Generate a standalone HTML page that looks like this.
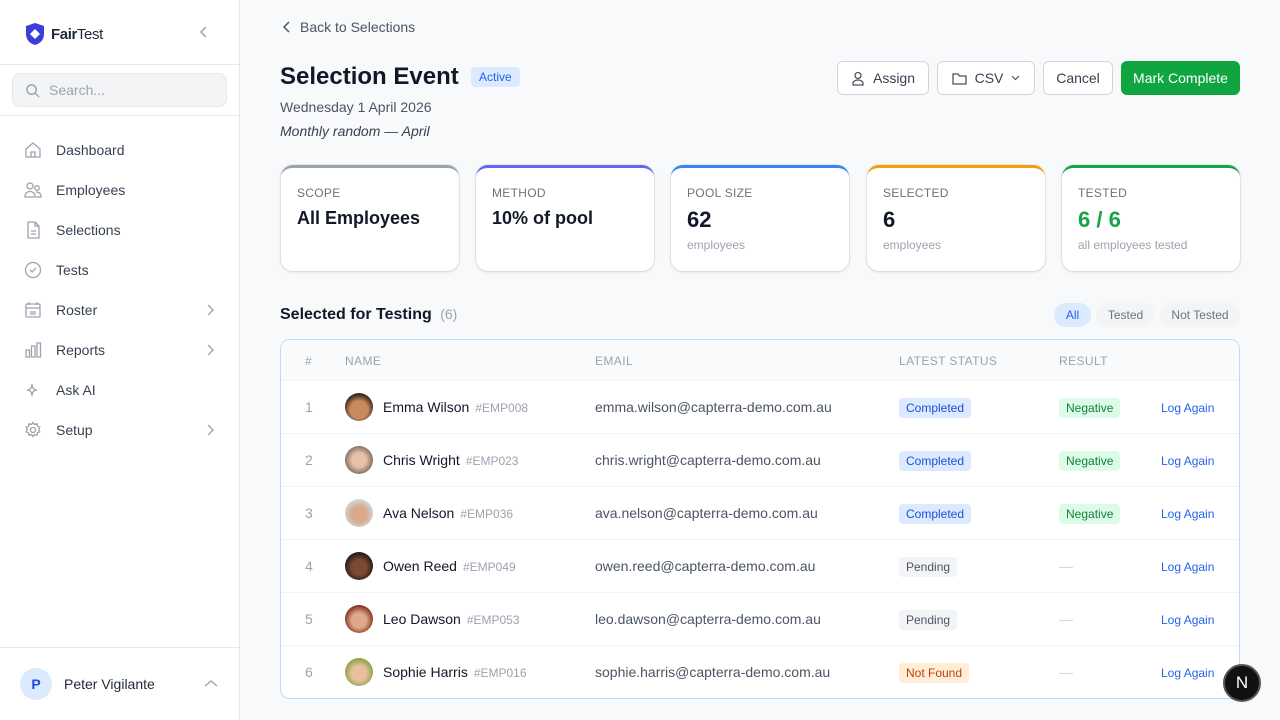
<!DOCTYPE html>
<html><head><meta charset="utf-8"><style>
*{box-sizing:border-box;margin:0;padding:0}
body{width:1280px;height:720px;overflow:hidden;background:#f8f9fb;font-family:"Liberation Sans",sans-serif;color:#111827;position:relative}
.sb{position:absolute;left:0;top:0;width:240px;height:720px;background:#fff;border-right:1px solid #e5e7eb}
.logo{position:absolute;left:24px;top:22px;display:flex;align-items:center;gap:5px;font-size:15px;letter-spacing:-0.4px;color:#1f2937}
.hr{position:absolute;left:0;width:239px;height:1px;background:#e5e7eb}
.search{position:absolute;left:12px;top:73px;width:215px;height:34px;background:#f3f4f6;border:1px solid #e5e7eb;border-radius:8px;font-size:14px;color:#9ca3af;padding:8px 0 0 36px}
.nav{position:absolute;left:24px;display:flex;align-items:center;font-size:14px;color:#374151;width:190px}
.nav svg{margin-right:14px}
.nav svg.ch{position:absolute;right:0;margin:0}
.user{position:absolute;left:20px;top:668px;display:flex;align-items:center;font-size:14px;color:#1f2937}
.av{width:32px;height:32px;border-radius:50%;background:#dbeafe;color:#1d4ed8;font-weight:bold;display:flex;align-items:center;justify-content:center;font-size:14px;margin-right:12px}
.back{position:absolute;left:282px;top:19px;font-size:14px;color:#4b5563}
h1{position:absolute;left:280px;top:63px;font-size:24px;font-weight:bold}
.act{position:absolute;left:471px;top:67px;background:#dbeafe;color:#2563eb;font-size:12px;padding:3px 8px;border-radius:4px}
.date{position:absolute;left:280px;top:99px;font-size:14px;color:#4b5563}
.sub{position:absolute;left:280px;top:123px;font-size:14px;color:#374151;font-style:italic}
.btn{position:absolute;top:61px;height:34px;border:1px solid #d1d5db;border-radius:6px;background:#fff;font-size:14px;color:#374151;display:flex;align-items:center;justify-content:center;gap:8px}
.card{position:absolute;top:165px;width:178px;height:106px;background:#fff;border-radius:12px;box-shadow:0 1px 3px rgba(0,0,0,.12),0 0 0 1px #eceef1;border-top:3px solid;padding:17px 16px}
.card .l{font-size:12px;color:#6b7280;letter-spacing:.3px;margin-top:1px}
.card .v{font-size:18px;font-weight:bold;margin-top:8px}
.card .v.n{font-size:22px;margin-top:7px}
.card .s{font-size:12px;color:#9ca3af;margin-top:5px}
.sec{position:absolute;left:280px;top:306px;font-size:16px;font-weight:bold}
.sec span{font-weight:normal;color:#9ca3af;font-size:14px;margin-left:4px}
.pill{position:absolute;top:303px;height:24px;border-radius:12px;font-size:12px;background:#f3f4f6;color:#6b7280;display:flex;align-items:center;justify-content:center}
.tbl{position:absolute;left:280px;top:339px;width:960px;height:360px;background:#fff;border:1px solid #bfdbfe;border-radius:10px;overflow:hidden}
.th{height:41px;background:#f8fafc;border-bottom:1px solid #f1f5f9;position:relative;font-size:12px;color:#9ca3af;letter-spacing:.4px}
.th div,.tr div{position:absolute}
.th div{top:14px}
.tr{height:53px;border-bottom:1px solid #f3f4f6;position:relative;font-size:14px}
.tr div{top:18px}
.tr .n{left:24px;color:#9ca3af}
.tr .face{left:64px;top:12px;width:28px;height:28px;border-radius:50%}
.tr .nm{left:102px;color:#111827}
.tr .nm span{color:#9ca3af;font-size:12px;margin-left:6px}
.tr .em{left:314px;color:#4b5563}
.b{font-size:12px;padding:3px 7px;border-radius:4px;top:17px!important}
.tr .st{left:618px}
.tr .rs{left:778px}
.tr .lg{left:880px;color:#2563eb;font-size:12px;top:20px}
.tr .dash{left:778px;color:#d1d5db}
.fab{position:absolute;left:1223px;top:664px;width:38px;height:38px;border-radius:50%;background:#111;border:2px solid #555;color:#fff;display:flex;align-items:center;justify-content:center;font-size:17px}
</style></head><body>
<div class="sb">
 <div class="logo"><svg width="22" height="24" viewBox="0 0 22 24"><path d="M11 1L20 4v8c0 6-4 9.5-9 11C6 21.5 2 18 2 12V4z" fill="#3b3fd8"/><path d="M11 7l5 5-5 5-5-5z" fill="#fff"/></svg><span><b>Fair</b>Test</span></div>
 <svg style="position:absolute;left:199px;top:26px" width="10" height="12" viewBox="0 0 10 12"><path d="M7 1L2 6l5 5" fill="none" stroke="#9ca3af" stroke-width="1.5"/></svg>
 <div class="hr" style="top:64px"></div>
 <div class="search"><svg style="position:absolute;left:12px;top:9px" width="15" height="15" viewBox="0 0 16 16"><circle cx="7" cy="7" r="5" fill="none" stroke="#9ca3af" stroke-width="1.5"/><path d="M11 11l4 4" stroke="#9ca3af" stroke-width="1.5"/></svg>Search...</div>
 <div class="hr" style="top:115px"></div>
 <div class="nav" style="top:141px"><svg width="18" height="18" viewBox="0 0 18 18" fill="none" stroke="#9ca3af" stroke-width="1.3"><path d="M2 8l7-6 7 6v8H2z M7 16v-5h4v5"/></svg>Dashboard</div>
 <div class="nav" style="top:181px"><svg width="18" height="18" viewBox="0 0 18 18" fill="none" stroke="#9ca3af" stroke-width="1.3"><circle cx="6" cy="5" r="3"/><circle cx="13" cy="7" r="2.3"/><path d="M1 16c0-4 2.5-5.5 5-5.5s5 1.5 5 5.5zM12 11c3 0 5 1.5 5 5h-5"/></svg>Employees</div>
 <div class="nav" style="top:221px"><svg width="18" height="18" viewBox="0 0 18 18" fill="none" stroke="#9ca3af" stroke-width="1.3"><path d="M4 1h7l4 4v12H4zM11 1v4h4M7 10h5M7 13h5"/></svg>Selections</div>
 <div class="nav" style="top:261px"><svg width="18" height="18" viewBox="0 0 18 18" fill="none" stroke="#9ca3af" stroke-width="1.3"><circle cx="9" cy="9" r="7.5"/><path d="M6 9l2 2 4-4"/></svg>Tests</div>
 <div class="nav" style="top:301px"><svg width="18" height="18" viewBox="0 0 18 18" fill="none" stroke="#9ca3af" stroke-width="1.3"><rect x="2" y="3" width="14" height="13" rx="1"/><path d="M2 7h14M5 1v3M13 1v3M6 11h6M6 13h6"/></svg>Roster<svg class="ch" width="8" height="12" viewBox="0 0 8 12"><path d="M2 1l5 5-5 5" fill="none" stroke="#9ca3af" stroke-width="1.3"/></svg></div>
 <div class="nav" style="top:341px"><svg width="18" height="18" viewBox="0 0 18 18" fill="none" stroke="#9ca3af" stroke-width="1.3"><rect x="2" y="9" width="3.5" height="7"/><rect x="7.5" y="5" width="3.5" height="11"/><rect x="13" y="2" width="3.5" height="14"/></svg>Reports<svg class="ch" width="8" height="12" viewBox="0 0 8 12"><path d="M2 1l5 5-5 5" fill="none" stroke="#9ca3af" stroke-width="1.3"/></svg></div>
 <div class="nav" style="top:381px"><svg width="18" height="18" viewBox="0 0 18 18" fill="none" stroke="#9ca3af" stroke-width="1.3"><path d="M8 3c0 4 2 6 5 6-3 0-5 2-5 6 0-4-2-6-5-6 3 0 5-2 5-6z"/></svg>Ask AI</div>
 <div class="nav" style="top:421px"><svg width="18" height="18" viewBox="0 0 18 18" fill="none" stroke="#9ca3af" stroke-width="1.3"><circle cx="9" cy="9" r="2.5"/><path d="M9 1.5l1.5 2 2.5-.8.5 2.5 2.3 1-1.2 2.3 1.2 2.3-2.3 1-.5 2.5-2.5-.8-1.5 2-1.5-2-2.5.8-.5-2.5-2.3-1 1.2-2.3-1.2-2.3 2.3-1 .5-2.5 2.5.8z"/></svg>Setup<svg class="ch" width="8" height="12" viewBox="0 0 8 12"><path d="M2 1l5 5-5 5" fill="none" stroke="#9ca3af" stroke-width="1.3"/></svg></div>
 <div class="hr" style="top:647px"></div>
 <div class="user"><div class="av">P</div>Peter Vigilante</div>
 <svg style="position:absolute;left:204px;top:679px" width="14" height="9" viewBox="0 0 14 9"><path d="M1 7l6-5 6 5" fill="none" stroke="#9ca3af" stroke-width="1.4"/></svg>
</div>

<div class="back"><svg width="10" height="12" viewBox="0 0 10 12" style="margin-right:8px;vertical-align:-1px"><path d="M7 1L2 6l5 5" fill="none" stroke="#4b5563" stroke-width="1.5"/></svg>Back to Selections</div>
<h1>Selection Event</h1>
<div class="act">Active</div>
<div class="date">Wednesday 1 April 2026</div>
<div class="sub">Monthly random — April</div>

<div class="btn" style="left:837px;width:92px"><svg width="14" height="15" viewBox="0 0 14 15" fill="none" stroke="#4b5563" stroke-width="1.3"><circle cx="7" cy="4.5" r="3"/><path d="M2 14v-1.5c0-2 2-3.5 5-3.5s5 1.5 5 3.5V14z"/></svg>Assign</div>
<div class="btn" style="left:937px;width:98px"><svg width="15" height="13" viewBox="0 0 15 13" fill="none" stroke="#4b5563" stroke-width="1.3"><path d="M1 2h5l1.5 2H14v8H1z"/></svg>CSV<svg width="9" height="6" viewBox="0 0 9 6"><path d="M1 1l3.5 3.5L8 1" fill="none" stroke="#4b5563" stroke-width="1.2"/></svg></div>
<div class="btn" style="left:1043px;width:70px">Cancel</div>
<div class="btn" style="left:1121px;width:119px;background:#0fa642;border-color:#0fa642;color:#fff">Mark Complete</div>

<div class="card" style="left:281px;border-top-color:#9ca3af"><div class="l">SCOPE</div><div class="v">All Employees</div></div>
<div class="card" style="left:476px;border-top-color:#6366f1"><div class="l">METHOD</div><div class="v">10% of pool</div></div>
<div class="card" style="left:671px;border-top-color:#3b82f6"><div class="l">POOL SIZE</div><div class="v n">62</div><div class="s">employees</div></div>
<div class="card" style="left:867px;border-top-color:#f59e0b"><div class="l">SELECTED</div><div class="v n">6</div><div class="s">employees</div></div>
<div class="card" style="left:1062px;border-top-color:#16a34a"><div class="l">TESTED</div><div class="v n" style="color:#16a34a">6 / 6</div><div class="s">all employees tested</div></div>

<div class="sec">Selected for Testing <span>(6)</span></div>
<div class="pill" style="left:1054px;width:37px;background:#dbeafe;color:#2563eb">All</div>
<div class="pill" style="left:1096px;width:59px">Tested</div>
<div class="pill" style="left:1160px;width:80px">Not Tested</div>

<div class="tbl">
 <div class="th"><div style="left:24px">#</div><div style="left:64px">NAME</div><div style="left:314px">EMAIL</div><div style="left:618px">LATEST STATUS</div><div style="left:778px">RESULT</div></div>
 <div class="tr"><div class="n">1</div><div class="face" style="background:radial-gradient(circle at 50% 60%,#c98a5e 40%,#3b2a20 70%)"></div><div class="nm">Emma Wilson<span>#EMP008</span></div><div class="em">emma.wilson@capterra-demo.com.au</div><div class="st b" style="background:#dbeafe;color:#1d4ed8">Completed</div><div class="rs b" style="background:#dcfce7;color:#15803d">Negative</div><div class="lg">Log Again</div></div>
 <div class="tr"><div class="n">2</div><div class="face" style="background:radial-gradient(circle at 50% 50%,#e7c2a8 35%,#8a7565 70%)"></div><div class="nm">Chris Wright<span>#EMP023</span></div><div class="em">chris.wright@capterra-demo.com.au</div><div class="st b" style="background:#dbeafe;color:#1d4ed8">Completed</div><div class="rs b" style="background:#dcfce7;color:#15803d">Negative</div><div class="lg">Log Again</div></div>
 <div class="tr"><div class="n">3</div><div class="face" style="background:radial-gradient(circle at 50% 55%,#d9a98a 35%,#cfd4d8 70%)"></div><div class="nm">Ava Nelson<span>#EMP036</span></div><div class="em">ava.nelson@capterra-demo.com.au</div><div class="st b" style="background:#dbeafe;color:#1d4ed8">Completed</div><div class="rs b" style="background:#dcfce7;color:#15803d">Negative</div><div class="lg">Log Again</div></div>
 <div class="tr"><div class="n">4</div><div class="face" style="background:radial-gradient(circle at 50% 55%,#7a4a32 35%,#2a1b15 70%)"></div><div class="nm">Owen Reed<span>#EMP049</span></div><div class="em">owen.reed@capterra-demo.com.au</div><div class="st b" style="background:#f3f4f6;color:#4b5563">Pending</div><div class="dash">—</div><div class="lg">Log Again</div></div>
 <div class="tr"><div class="n">5</div><div class="face" style="background:radial-gradient(circle at 50% 55%,#e0a88a 35%,#8a3520 70%)"></div><div class="nm">Leo Dawson<span>#EMP053</span></div><div class="em">leo.dawson@capterra-demo.com.au</div><div class="st b" style="background:#f3f4f6;color:#4b5563">Pending</div><div class="dash">—</div><div class="lg">Log Again</div></div>
 <div class="tr" style="border-bottom:none"><div class="n">6</div><div class="face" style="background:radial-gradient(circle at 50% 55%,#e8c09e 35%,#8fa24a 70%)"></div><div class="nm">Sophie Harris<span>#EMP016</span></div><div class="em">sophie.harris@capterra-demo.com.au</div><div class="st b" style="background:#ffedd5;color:#c2410c">Not Found</div><div class="dash">—</div><div class="lg">Log Again</div></div>
</div>
<div class="fab">N</div>
</body></html>
